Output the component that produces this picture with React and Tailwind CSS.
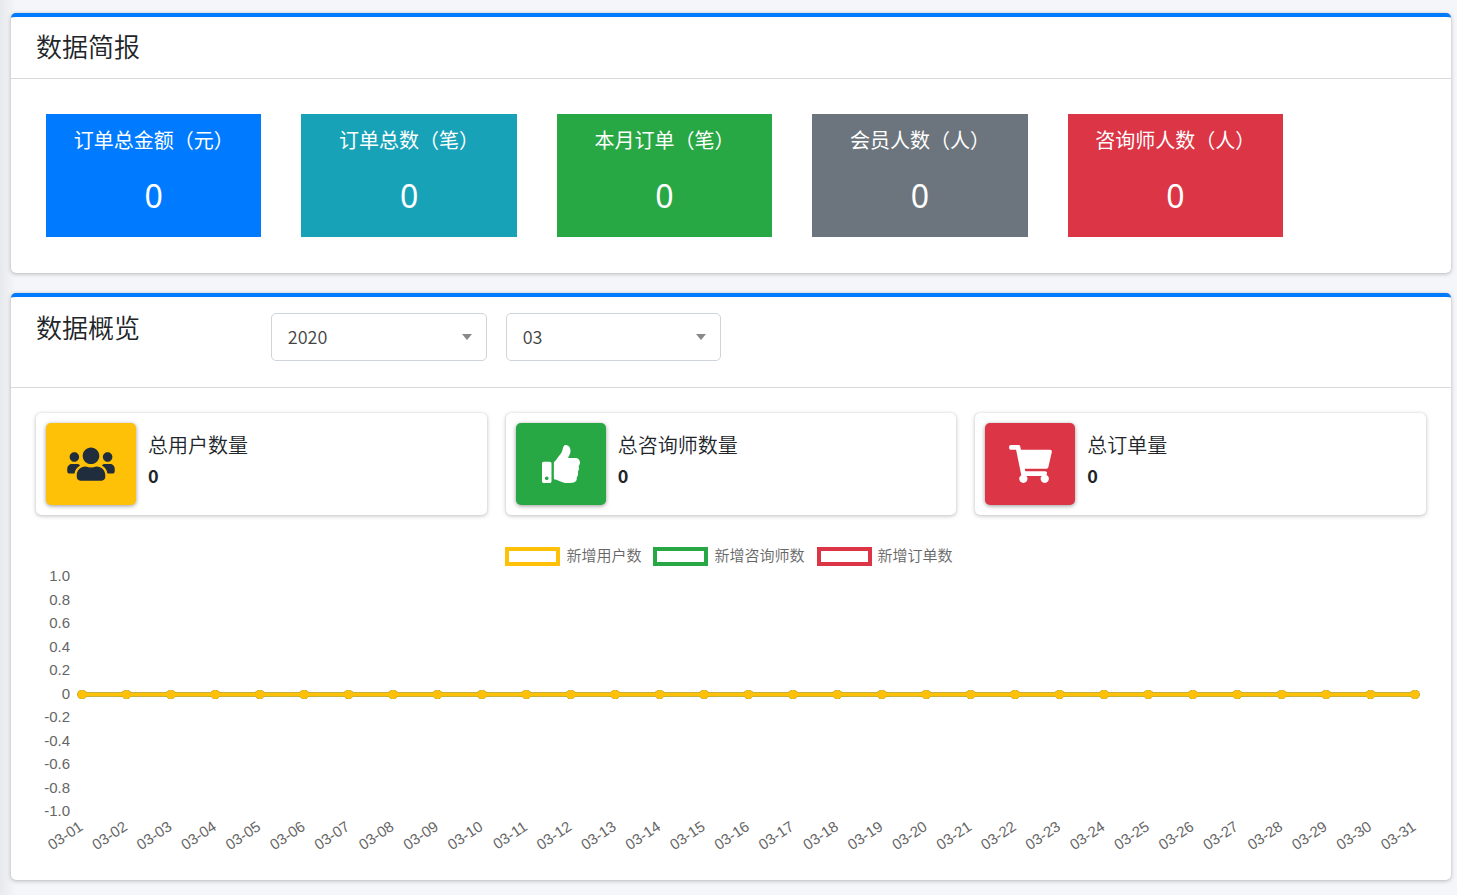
import { useState } from "react";
import { FaUsers, FaThumbsUp, FaShoppingCart } from "react-icons/fa";

const reports = [
  { title: "订单总金额（元）", value: 0, color: "bg-[#007bff]" },
  { title: "订单总数（笔）", value: 0, color: "bg-[#17a2b8]" },
  { title: "本月订单（笔）", value: 0, color: "bg-[#28a745]" },
  { title: "会员人数（人）", value: 0, color: "bg-[#6c757d]" },
  { title: "咨询师人数（人）", value: 0, color: "bg-[#dc3545]" },
];

const totals = [
  {
    title: "总用户数量",
    value: 0,
    icon: FaUsers,
    iconSize: "h-[38px] w-12",
    color: "bg-[#ffc107] text-[#1f2d3d]",
  },
  {
    title: "总咨询师数量",
    value: 0,
    icon: FaThumbsUp,
    iconSize: "h-[38px] w-[38px]",
    color: "bg-[#28a745] text-white",
  },
  {
    title: "总订单量",
    value: 0,
    icon: FaShoppingCart,
    iconSize: "h-[38px] w-[43px]",
    color: "bg-[#dc3545] text-white",
  },
];

const days = Array.from({ length: 31 }, (_, i) => String(i + 1).padStart(2, "0"));
const months = Array.from({ length: 12 }, (_, i) => String(i + 1).padStart(2, "0"));
const years = ["2019", "2020", "2021"];
const ticks = ["1.0", "0.8", "0.6", "0.4", "0.2", "0", "-0.2", "-0.4", "-0.6", "-0.8", "-1.0"];

const series = [
  { label: "新增用户数", color: "#ffc107", border: "border-[#ffc107]", data: days.map(() => 0) },
  { label: "新增咨询师数", color: "#28a745", border: "border-[#28a745]", data: days.map(() => 0) },
  { label: "新增订单数", color: "#dc3545", border: "border-[#dc3545]", data: days.map(() => 0) },
];

const Card = ({ header, children }) => (
  <section className="rounded-[5px] border-t-4 border-[#007bff] bg-white shadow-[0_0_1px_rgba(0,0,0,0.15),0_1px_4px_rgba(0,0,0,0.25)]">
    <div className="border-b border-black/15 px-[25px]">{header}</div>
    {children}
  </section>
);

const Select = ({ label, value, options, onChange }) => (
  <div className="relative">
    <select
      aria-label={label}
      value={value}
      onChange={(e) => onChange(e.target.value)}
      className="h-12 w-full appearance-none rounded-[5px] border border-[#ced4da] bg-white px-4 pb-[2px] text-lg font-[350] text-[#444]"
    >
      {options.map((o) => (
        <option key={o} value={o}>
          {o}
        </option>
      ))}
    </select>
    <svg
      viewBox="0 0 10 6"
      className="pointer-events-none absolute top-[21px] right-[15px] h-[6px] w-[10px] fill-[#888]"
    >
      <path d="M0 0h10L5 6z" />
    </svg>
  </div>
);

const LineChart = ({ month }) => {
  const left = 46;
  const top = 11;
  const width = 1333;
  const height = 235;
  const x = (i) => left + (width / (days.length - 1)) * i;
  const y = (v) => top + ((1 - v) / 2) * height;

  return (
    <svg
      viewBox="0 0 1390 294"
      className="block w-full fill-[#666] font-['Liberation_Sans',Arial,sans-serif] text-[15px]"
    >
      {ticks.map((t) => (
        <text key={t} x="34" y={y(Number(t)) + 4} textAnchor="end">
          {t}
        </text>
      ))}
      {days.map((d, i) => (
        <text
          key={d}
          textAnchor="end"
          transform={`translate(${x(i) + 2} 263) rotate(-34)`}
        >
          {month}-{d}
        </text>
      ))}
      {[...series].reverse().map((s) => (
        <g key={s.label} fill={s.color}>
          <polyline
            points={s.data.map((v, i) => `${x(i)},${y(v)}`).join(" ")}
            fill="none"
            stroke={s.color}
            strokeWidth="4"
          />
          {s.data.map((v, i) => (
            <circle key={i} cx={x(i)} cy={y(v)} r="4.6" />
          ))}
        </g>
      ))}
    </svg>
  );
};

const App = () => {
  const [year, setYear] = useState("2020");
  const [month, setMonth] = useState("03");

  return (
    <div className="min-h-screen bg-[#f4f6f9] bg-linear-to-r from-[#e7e9ec] to-[#f4f6f9] to-[16px] font-['Noto_Sans_CJK_SC',sans-serif] text-[#212529]">
      <main className="flex flex-col gap-5 pt-[13px] pr-[6px] pb-[15px] pl-[11px]">
        <Card
          header={
            <h3 className="pt-[15px] pb-[18px] text-[26px] leading-7 font-[350]">数据简报</h3>
          }
        >
          <div className="grid grid-cols-5 gap-10 pt-[35px] pr-[168px] pb-9 pl-[35px]">
            {reports.map((r) => (
              <div
                key={r.title}
                className={`h-[123px] pt-[10px] text-center text-white ${r.color}`}
              >
                <p className="text-xl leading-8">{r.title}</p>
                <p className="mt-4 font-['Noto_Sans',sans-serif] text-[32px] leading-12">
                  {r.value}
                </p>
              </div>
            ))}
          </div>
        </Card>

        <Card
          header={
            <div className="grid grid-cols-6 gap-[19px] pt-4 pb-[26px]">
              <h3 className="text-[26px] leading-7 font-[350]">数据概览</h3>
              <Select label="年份" value={year} options={years} onChange={setYear} />
              <Select label="月份" value={month} options={months} onChange={setMonth} />
            </div>
          }
        >
          <div className="px-[25px] pt-[25px] pb-5">
            <div className="grid grid-cols-3 gap-[19px]">
              {totals.map(({ title, value, icon: Icon, iconSize, color }) => (
                <div
                  key={title}
                  className="flex rounded-[5px] bg-white p-[10px] shadow-[0_0_1px_rgba(0,0,0,0.15),0_1px_4px_rgba(0,0,0,0.25)]"
                >
                  <span
                    className={`flex h-[82px] w-[90px] items-center justify-center rounded-[5px] shadow-[0_1px_4px_rgba(0,0,0,0.4)] ${color}`}
                  >
                    <Icon className={iconSize} />
                  </span>
                  <div className="flex flex-col pt-[7px] pl-3">
                    <span className="text-xl leading-[30px] font-[350]">{title}</span>
                    <span className="text-lg leading-[30px] font-bold">{value}</span>
                  </div>
                </div>
              ))}
            </div>

            <ul className="mt-8 mr-1 flex justify-center gap-3">
              {series.map((s) => (
                <li key={s.label} className="flex items-start gap-[6px]">
                  <span className={`h-[19px] w-[55px] border-4 ${s.border}`} />
                  <span className="text-[15px] leading-4 font-[350] text-[#666]">{s.label}</span>
                </li>
              ))}
            </ul>

            <LineChart month={month} />
          </div>
        </Card>
      </main>
    </div>
  );
};

export default App;
